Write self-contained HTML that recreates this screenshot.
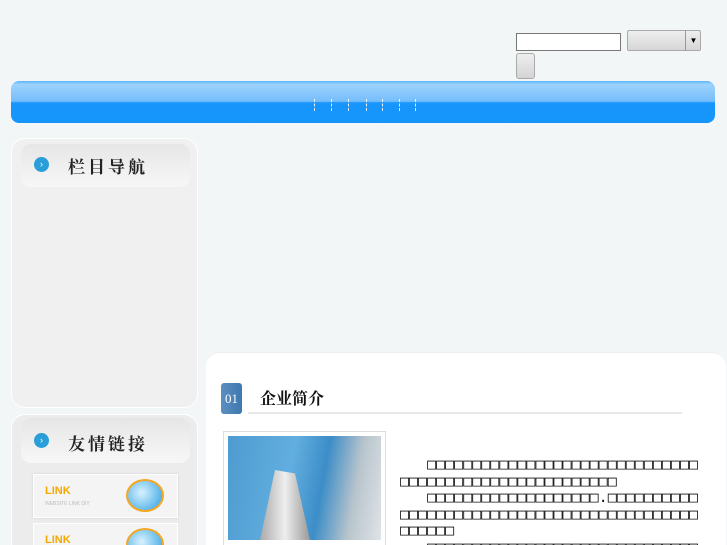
<!DOCTYPE html>
<html><head><meta charset="utf-8"><style>
html,body{margin:0;width:727px;height:545px;overflow:hidden}
body{background:#f3f6f6;font-family:"Liberation Sans","Noto Sans CJK SC",sans-serif;position:relative}
.a{position:absolute}
.t{font-family:"DejaVu Sans Mono",monospace;font-size:15px;line-height:16.5px;color:#111;letter-spacing:0}
.s{position:absolute;top:99px;height:12px;border-left:1px dashed #e8f4ff}
</style></head><body>
<div class="a" style="left:516px;top:33px;width:103px;height:16px;border:1px solid #777;background:#fff"></div>
<div class="a" style="left:627px;top:30px;width:72px;height:19px;border:1px solid #aaa;border-radius:2px;background:linear-gradient(#eee,#d6d6d6)"></div>
<div class="a" style="left:685px;top:30px;width:15px;height:21px;border-left:1px solid #999;font-size:8px;text-align:center;line-height:21px">▼</div>
<div class="a" style="left:516px;top:53px;width:17px;height:24px;border:1px solid #aaa;border-radius:3px;background:linear-gradient(#eee,#d4d4d4)"></div>
<div class="a" style="left:11px;top:81px;width:704px;height:42px;border-radius:8px;background:linear-gradient(#5bb6fb 0,#9dd2fd 8%,#75befb 48%,#1995fb 52%,#1595fa 100%)"></div>
<div class="s" style="left:314px"></div><div class="s" style="left:331px"></div><div class="s" style="left:348px"></div><div class="s" style="left:366px"></div><div class="s" style="left:382px"></div><div class="s" style="left:399px"></div><div class="s" style="left:415px"></div>

<div class="a" style="left:11px;top:138px;width:185px;height:268px;border:1px solid #fff;border-radius:14px;background:#f0f0f0"></div>
<div class="a" style="left:21px;top:144px;width:169px;height:43px;border-radius:10px;background:linear-gradient(#e6e6e6,#f7f7f7)"></div>
<div class="a" style="left:34px;top:157px;width:15px;height:15px;border-radius:50%;background:#2a9ed8;color:#fff;font-size:9px;text-align:center;line-height:15px">›</div>
<div class="a" style="left:68px;top:153px;font-size:17px;font-weight:bold;letter-spacing:3px;color:#222;font-family:'Noto Serif CJK SC',serif">栏目导航</div>

<div class="a" style="left:11px;top:414px;width:185px;height:140px;border:1px solid #fff;border-radius:14px;background:#ececec"></div>
<div class="a" style="left:21px;top:418px;width:169px;height:45px;border-radius:10px;background:linear-gradient(#e6e6e6,#f7f7f7)"></div>
<div class="a" style="left:34px;top:433px;width:15px;height:15px;border-radius:50%;background:#2a9ed8;color:#fff;font-size:9px;text-align:center;line-height:15px">›</div>
<div class="a" style="left:68px;top:430px;font-size:17px;font-weight:bold;letter-spacing:3px;color:#222;font-family:'Noto Serif CJK SC',serif">友情链接</div>
<div class="a" style="left:33px;top:474px;width:143px;height:42px;border:1px solid #fff;background:#f4f4f4;box-shadow:0 0 2px #ccc"></div>
<div class="a" style="left:45px;top:485px;color:#f5a800;font-weight:bold;font-size:11px">LINK</div>
<div class="a" style="left:45px;top:501px;color:#bbb;font-size:5px">WEBSITE LINK DIY</div>
<div class="a" style="left:126px;top:479px;width:34px;height:29px;border-radius:50%;background:radial-gradient(circle at 40% 40%,#d8f2ff,#2a9ee0);border:2px solid #f5a623"></div>
<div class="a" style="left:33px;top:523px;width:143px;height:30px;border:1px solid #fff;background:#f4f4f4"></div>
<div class="a" style="left:45px;top:534px;color:#f5a800;font-weight:bold;font-size:11px">LINK</div>
<div class="a" style="left:126px;top:528px;width:34px;height:29px;border-radius:50%;background:radial-gradient(circle at 40% 40%,#d8f2ff,#2a9ee0);border:2px solid #f5a623"></div>

<div class="a" style="left:206px;top:352px;width:520px;height:193px;border-radius:14px 14px 0 0;background:#fff;border-top:1px solid #eee"></div>
<div class="a" style="left:221px;top:383px;width:21px;height:31px;border-radius:3px;background:linear-gradient(90deg,#5c8fbf,#3e78b0);color:#fff;font-family:'Liberation Serif',serif;font-size:13px;line-height:31px;text-align:center">01</div>
<div class="a" style="left:260px;top:386px;font-size:16px;font-weight:bold;color:#111;font-family:'Noto Serif CJK SC',serif">企业简介</div>
<div class="a" style="left:248px;top:412px;width:434px;height:2px;background:#e8e8e8"></div>
<div class="a" style="left:223px;top:431px;width:161px;height:114px;border:1px solid #ddd;background:#fff"></div>
<div class="a" style="left:228px;top:436px;width:153px;height:104px;background:linear-gradient(100deg,#4d9bd0 0%,#62aee0 40%,#3c8dc8 60%,#b8c4cc 80%,#dfe4e8 100%)"></div>
<div class="a" style="left:260px;top:470px;width:50px;height:70px;background:linear-gradient(90deg,#aaa,#eee,#999);clip-path:polygon(30% 0,70% 5%,100% 100%,0 100%)"></div>
<div class="a t" style="left:400px;top:456px;width:320px;white-space:pre">   □□□□□□□□□□□□□□□□□□□□□□□□□□□□□□
□□□□□□□□□□□□□□□□□□□□□□□□
   □□□□□□□□□□□□□□□□□□□.□□□□□□□□□□
□□□□□□□□□□□□□□□□□□□□□□□□□□□□□□□□□
□□□□□□
   □□□□□□□□□□□□□□□□□□□□□□□□□□□□□□</div>
</body></html>
